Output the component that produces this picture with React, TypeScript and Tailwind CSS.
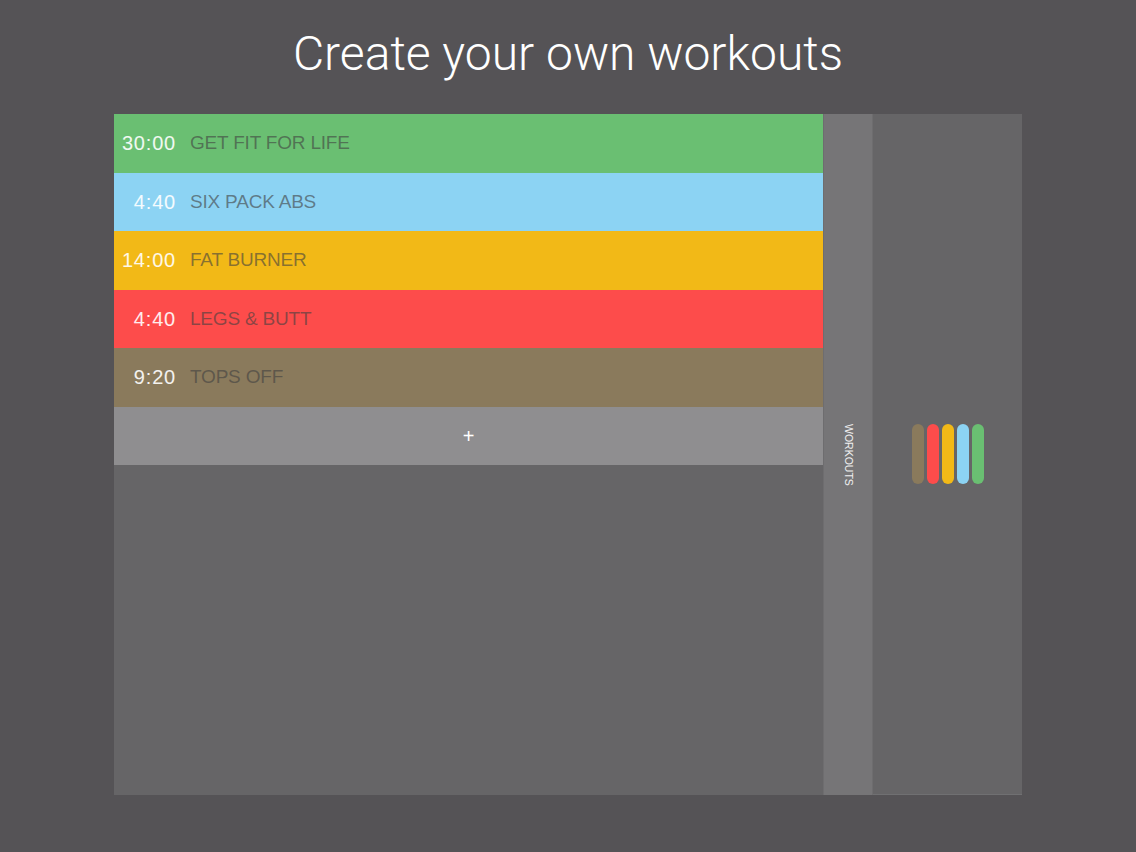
const workouts = [
  { time: "30:00", name: "GET FIT FOR LIFE", bg: "bg-[#6abf72]" },
  { time: "4:40", name: "SIX PACK ABS", bg: "bg-[#8cd3f3]" },
  { time: "14:00", name: "FAT BURNER", bg: "bg-[#f2b917]" },
  { time: "4:40", name: "LEGS & BUTT", bg: "bg-[#fd4c4b]" },
  { time: "9:20", name: "TOPS OFF", bg: "bg-[#8a7a5c]" },
];

// stripe order in the side panel runs bottom-up through the list
const stripes = ["bg-[#8a7a5c]", "bg-[#fd4c4b]", "bg-[#f2b917]", "bg-[#8cd3f3]", "bg-[#6abf72]"];

export default function App() {
  return (
    <div className="w-[1136px] h-[852px] bg-[#555356] flex flex-col font-['Liberation_Sans',Arial,sans-serif]">
      <div className="h-[107px] flex items-center justify-center">
        <h1 className="text-[48px] leading-none font-light text-white font-['Roboto',sans-serif]">
          Create your own workouts
        </h1>
      </div>

      <div className="mt-[7px] ml-[114px] w-[908px] h-[681px] flex">
        <div className="w-[709px] flex flex-col bg-[#666567]">
          {workouts.map((w) => (
            <div key={w.name} className={`h-[58.5px] flex items-center ${w.bg}`}>
              <span className="w-[62px] text-right text-[20px] tracking-[0.8px] text-white/90">{w.time}</span>
              <span className="ml-[14px] text-[19px] tracking-[-0.2px] text-[#404040]/60">{w.name}</span>
            </div>
          ))}
          <div className="h-[58.5px] flex items-center justify-center bg-[#8f8e90]">
            <span className="text-[20px] text-white leading-none">+</span>
          </div>
        </div>

        <div className="w-[50px] bg-[#767577] border-x border-[#6e6d6f] flex items-center justify-center">
          <span className="[writing-mode:vertical-rl] text-[10.5px] text-white/90">
            WORKOUTS
          </span>
        </div>

        <div className="flex-1 bg-[#666567] border-b border-[#707072] flex items-center justify-center">
          <div className="flex gap-[3px]">
            {stripes.map((c) => (
              <div key={c} className={`w-[12px] h-[60px] rounded-full ${c}`} />
            ))}
          </div>
        </div>
      </div>
    </div>
  );
}
